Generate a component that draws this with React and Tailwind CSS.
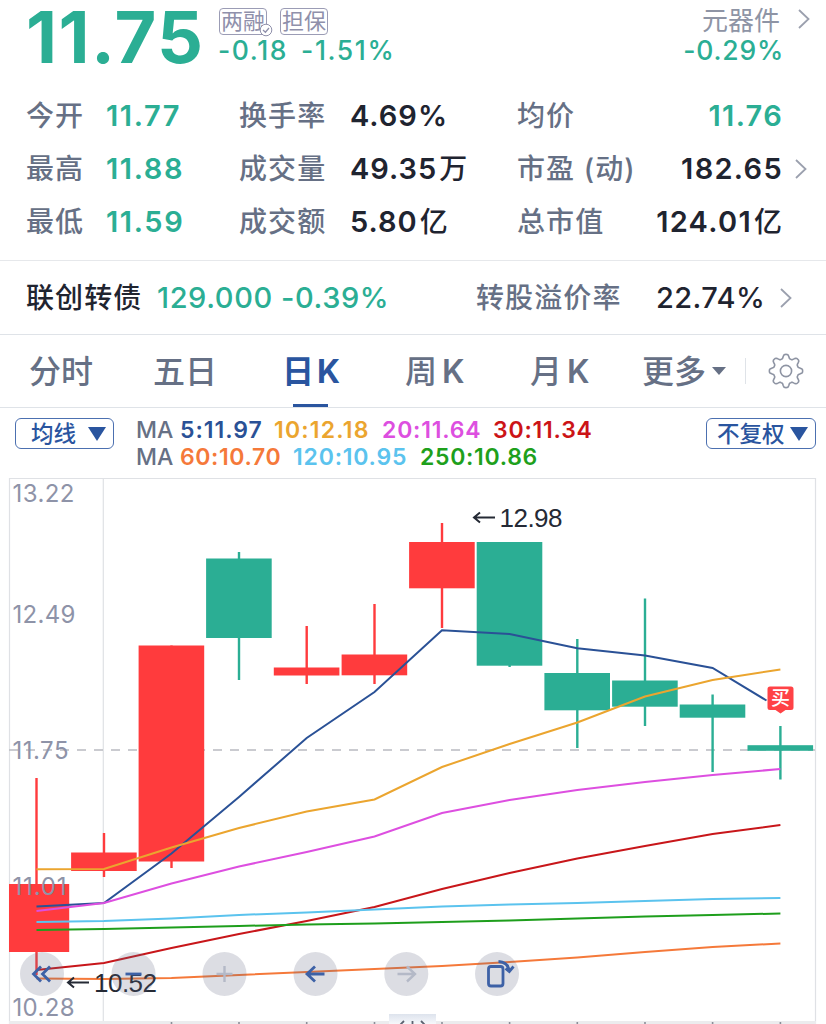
import React from 'react';

const CENTERS = [36.5, 104, 171.5, 239, 306.7, 374.5, 442, 509.6, 577.3, 645, 712.6, 780.4];

const RED = '#ff3b3d';
const GREEN = '#2bae94';

// body top / bottom, wick top / bottom
const CANDLES = [
  { up: true, body: [884, 952], wick: [778, 975] },
  { up: true, body: [852.5, 871], wick: [833, 877] },
  { up: true, body: [645.5, 861.5], wick: [645.5, 868] },
  { up: false, body: [558.5, 638], wick: [552, 680] },
  { up: true, body: [667.5, 675.5], wick: [626, 684] },
  { up: true, body: [654.5, 675.3], wick: [604, 684] },
  { up: true, body: [542, 588.3], wick: [523, 628] },
  { up: false, body: [542, 665.7], wick: [542, 667] },
  { up: false, body: [673, 710.3], wick: [639, 748] },
  { up: false, body: [680.5, 706.7], wick: [598.5, 726] },
  { up: false, body: [704.5, 717.7], wick: [694.5, 772] },
  { up: false, body: [745.2, 750.8], wick: [726, 779.5] },
];

const AVERAGES = [
  { color: '#c8161a', ys: [970, 963, 948, 934, 921, 907, 889, 873, 858.5, 846, 834, 825] },
  { color: '#f5793a', ys: [978.5, 979, 978, 975, 972, 969, 966, 962, 957.5, 952, 947, 943.5] },
  { color: '#5bc3ee', ys: [922, 921, 918.5, 915, 912.5, 909.5, 906.5, 904.5, 903, 901, 899, 898] },
  { color: '#1e9e1c', ys: [930, 929, 927.5, 926, 924.5, 923.5, 922, 920.5, 918.5, 916.5, 915, 913.5] },
  // the last segment stops short of the buy marker
  { color: '#2a5196', ys: [906.5, 903, 853.5, 797, 738, 692, 630.3, 634, 648.3, 655.6, 668], end: '766.5,700.5' },
  { color: '#dd4fe0', ys: [911, 903, 883.5, 866.5, 852, 836.5, 813, 800, 790, 782, 775, 769] },
  { color: '#eba52f', ys: [869.3, 869, 847.5, 828, 811.5, 799.5, 767, 744, 722.5, 696.5, 680, 669.5] },
];

const PRICE_LABELS = [
  { text: '13.22', y: 501.5, length: 62 },
  { text: '12.49', y: 623, length: 63 },
  { text: '11.75', y: 759, length: 56 },
  { text: '11.01', y: 894.5, length: 54 },
  { text: '10.28', y: 1015.5, length: 62 },
];

const TABS = [
  { label: '分时', width: 'w-[124px]' },
  { label: '五日', width: 'w-[129px]' },
  { label: '日', k: true, width: 'w-[123px]', active: true },
  { label: '周', k: true, width: 'w-[125px]' },
  { label: '月', k: true, width: 'w-[112px]' },
];

const STATS = [
  [
    { label: '今开', value: '11.77', green: true },
    { label: '换手率', value: '4.69%' },
    { label: '均价', value: '11.76', green: true },
  ],
  [
    { label: '最高', value: '11.88', green: true },
    { label: '成交量', value: '49.35', unit: '万' },
    { label: '市盈 (动)', value: '182.65', arrow: true },
  ],
  [
    { label: '最低', value: '11.59', green: true },
    { label: '成交额', value: '5.80', unit: '亿' },
    { label: '总市值', value: '124.01', unit: '亿' },
  ],
];

const Chevron = ({ className = '' }) => (
  <svg className={className} width="12" height="20" viewBox="0 0 12 20" fill="none" stroke="#9ba0ae" strokeWidth="1.8">
    <path d="M1 1 L10.5 10 L1 19" />
  </svg>
);

const Value = ({ item, className = '' }) => (
  <span
    className={`whitespace-nowrap text-[29px] font-semibold ${
      item.green ? 'text-[#2bae94]' : 'text-[#1f2430]'
    } ${className}`}
  >
    {item.value}
    {item.unit && <span className="ml-[2px] text-[28px] font-medium tracking-normal">{item.unit}</span>}
  </span>
);

const Label = ({ children, className = '' }) => (
  <span className={`text-[28px] font-medium tracking-[1.1px] whitespace-nowrap text-[#667085] ${className}`}>
    {children}
  </span>
);

const Header = () => (
  <header className="flex h-[89px]">
    <div className="w-[219px] pl-[26px] text-[72px] leading-[73px] font-bold tracking-[1.4px] whitespace-nowrap text-[#2bae94]">
      11.75
    </div>
    <div className="flex-1 pt-2">
      <div className="flex h-[27px] text-[22px] leading-[25px] text-[#8f90ab]">
        <div className="relative h-[27px] w-[48px] rounded-[4px] border border-[#9b9cb5] text-center whitespace-nowrap">
          两融
          <svg className="absolute top-[14px] left-[39px]" width="14" height="14" viewBox="0 0 14 14" fill="none">
            <circle cx="7" cy="7" r="5.8" fill="#fff" stroke="#8f90ab" strokeWidth="1" />
            <path d="M4 7 L6.4 9.2 L10 5" stroke="#8f90ab" strokeWidth="1.3" />
          </svg>
        </div>
        <div className="ml-[13px] h-[27px] w-[48px] rounded-[4px] border border-[#9b9cb5] text-center whitespace-nowrap">
          担保
        </div>
      </div>
      <div className="-ml-px flex gap-[13px] text-[26.5px] leading-[30px] font-medium tracking-[1.6px] text-[#2bae94]">
        <span>-0.18</span>
        <span>-1.51%</span>
      </div>
    </div>
    <div className="w-[160px] pt-1 text-right">
      <div className="text-[26px] leading-[33px] text-[#8e94a5]">元器件</div>
      <div className="-mr-1 text-[26.5px] leading-[27px] font-medium tracking-[0.8px] text-[#2bae94]">-0.29%</div>
    </div>
    <div className="w-[46px] pt-[9px] pl-[18px]">
      <Chevron />
    </div>
  </header>
);

const Stats = () => (
  <section className="h-[171px]">
    {STATS.map(([a, b, c]) => (
      <div key={a.label} className="flex h-[53px] items-center">
        <Label className="w-[106px] pl-[26px]">{a.label}</Label>
        <Value item={a} className="w-[133px] tracking-[1.6px]" />
        <Label className="w-[111px]">{b.label}</Label>
        <Value item={b} className="w-[167px] tracking-[1px]" />
        <Label className="w-[125px] tracking-[0.6px]">{c.label}</Label>
        <Value item={c} className={`text-right tracking-[1.3px] ${c.unit ? 'w-[140px]' : 'w-[141px]'}`} />
        {c.arrow && <Chevron className="ml-[12px]" />}
      </div>
    ))}
  </section>
);

const BondRow = () => (
  <section className="flex h-[74px] items-center border-t border-[#e6e8eb] text-[29px] font-medium">
    <span className="w-[157px] pl-[26px] text-[28px] tracking-[1.1px] whitespace-nowrap text-[#1f2430]">联创转债</span>
    <span className="w-[124px] tracking-[0.6px] text-[#2bae94]">129.000</span>
    <span className="w-[195px] tracking-[0.6px] text-[#2bae94]">-0.39%</span>
    <Label className="w-[180px]">转股溢价率</Label>
    <span className="w-[124px] tracking-[0.4px] text-[#1f2430]">22.74%</span>
    <Chevron />
  </section>
);

const Gear = () => {
  // eight rounded teeth around the hub
  const points = [];
  for (let i = 0; i < 96; i++) {
    const t = (i / 96) * Math.PI * 2;
    const wave = Math.max(-1, Math.min(1, 1.5 * Math.cos(8 * t)));
    const r = 14.6 + 2 * wave;
    points.push(`${(18 + r * Math.cos(t)).toFixed(2)} ${(18 + r * Math.sin(t)).toFixed(2)}`);
  }
  return (
    <svg width="36" height="36" viewBox="0 0 36 36" fill="none" stroke="#8e94a3" strokeWidth="1.6" strokeLinejoin="round">
      <path d={`M${points.join('L')}Z`} />
      <circle cx="18" cy="18" r="5.6" />
    </svg>
  );
};

const Tabs = () => (
  <nav className="flex h-[74px] items-center border-t border-b border-[#dfe3e8] pl-[29px] text-[32px] font-medium text-[#667085]">
    {TABS.map((tab) => (
      <div
        key={tab.label}
        className={`relative flex h-full items-center pt-[2px] whitespace-nowrap ${tab.width} ${
          tab.active ? 'font-bold text-[#2a559f]' : ''
        }`}
      >
        {tab.label}
        {tab.k && <span className={tab.active ? 'ml-[3px]' : 'ml-[5px] font-semibold'}>K</span>}
        {tab.active && <span className="absolute bottom-0 left-[11px] h-[3px] w-[35px] bg-[#2a559f]" />}
      </div>
    ))}
    <div className="flex w-[103px] items-center gap-[6px] pt-[2px] whitespace-nowrap">
      更多
      <svg className="-mt-[2px]" width="14" height="8" viewBox="0 0 14 8" fill="#667085">
        <path d="M0 0H14L7 8Z" />
      </svg>
    </div>
    <div className="mr-[22px] h-[26px] w-px bg-[#dfe3e8]" />
    <Gear />
  </nav>
);

const SelectBox = ({ label, className }) => (
  <div className={`flex h-[31px] items-center justify-between rounded-[6px] border border-[#4c70b0] text-[22.5px] font-medium whitespace-nowrap text-[#2a559f] ${className}`}>
    {label}
    <svg width="18" height="14" viewBox="0 0 18 14" fill="#2a559f">
      <path d="M0 0H18L9 14Z" />
    </svg>
  </div>
);

const Legend = () => (
  <section className="flex h-[70px] pt-[10px]">
    <SelectBox label="均线" className="ml-[15px] w-[99px] pr-[7px] pl-[15px]" />
    <div className="ml-[22px] w-[570px] text-[23px] leading-[27px] font-semibold tracking-[0.8px] whitespace-nowrap">
      <div className="-mt-px flex">
        <span className="w-[44px] font-medium tracking-[0px] text-[#667085]">MA</span>
        <span className="w-[94px] tracking-[1px] text-[#2a5196]">5:11.97</span>
        <span className="w-[108px] tracking-[1.2px] text-[#eba52f]">10:12.18</span>
        <span className="w-[111px] text-[#dd4fe0]">20:11.64</span>
        <span className="text-[#cc1417]">30:11.34</span>
      </div>
      <div className="flex">
        <span className="w-[44px] font-medium tracking-[0px] text-[#667085]">MA</span>
        <span className="w-[113px] tracking-[0.6px] text-[#f5793a]">60:10.70</span>
        <span className="w-[127px] text-[#5bc3ee]">120:10.95</span>
        <span className="tracking-[0.7px] text-[#1ea01c]">250:10.86</span>
      </div>
    </div>
    <SelectBox label="不复权" className="w-[110px] pr-[7px] pl-[10px]" />
  </section>
);

const Candle = ({ x, up, body, wick, first }) => {
  const left = first ? 9 : x - 32.9;
  const right = first ? 69.2 : x + 32.7;
  return (
    <g fill={up ? RED : GREEN}>
      <rect x={x - 1.2} y={wick[0]} width="2.4" height={wick[1] - wick[0]} />
      <rect x={left} y={body[0]} width={right - left} height={body[1] - body[0]} />
    </g>
  );
};

const ChartButtons = () => (
  <g>
    {[42, 133.5, 224.5, 315.5, 406.3, 497].map((x) => (
      <circle key={x} cx={x} cy="974" r="22" fill="#606680" fillOpacity="0.22" />
    ))}
    <g fill="none" stroke="#3d61a6" strokeWidth="2.8">
      <path d="M41 966.5 L33.5 974 L41 981.5 M50 966.5 L42.5 974 L50 981.5" />
      <path d="M125.5 974H141.5" />
      <path d="M324.5 974H307 M315 966.5 L307 974 L315 981.5" />
      <rect x="488.5" y="966.5" width="14.5" height="19.5" rx="2.5" />
      <path d="M498.5 961.5 Q508 962 509.3 971 M505.5 968.5 L509.3 971.5 L513.5 966.5" />
    </g>
    <g fill="none" stroke="#b4b9c7" strokeWidth="2.4">
      <path d="M216.5 974H232.5 M224.5 966V982" />
      <path d="M397.5 974H415 M407 966.5 L415 974 L407 981.5" />
    </g>
  </g>
);

const Chart = () => (
  <svg className="block" width="826" height="546" viewBox="0 478 826 546" fontFamily="Inter, sans-serif">
    <defs>
      <linearGradient id="handle" x1="0" y1="0" x2="0" y2="1">
        <stop offset="0" stopColor="#dde3ed" />
        <stop offset="1" stopColor="#f6f8fb" />
      </linearGradient>
    </defs>
    <path d="M9.5 1024V478.5H815.5V1024 M103.3 478V1021" fill="none" stroke="#dfe1e5" strokeWidth="1.2" />
    <path d="M9 750H815" stroke="#b9bbc1" strokeWidth="1.3" strokeDasharray="9 8" />

    {CANDLES.map((candle, i) => (
      <Candle key={i} x={CENTERS[i]} first={i === 0} {...candle} />
    ))}

    {AVERAGES.map((line) => (
      <polyline
        key={line.color}
        points={[...line.ys.map((y, i) => `${CENTERS[i]},${y}`), line.end].filter(Boolean).join(' ')}
        fill="none"
        stroke={line.color}
        strokeWidth="2"
      />
    ))}

    {PRICE_LABELS.map((label) => (
      <text key={label.text} x="12.5" y={label.y} fontSize="24" fill="#8e93a8" textLength={label.length}>
        {label.text}
      </text>
    ))}

    {/* high / low markers */}
    <g fill="none" stroke="#252a35" strokeWidth="2">
      <path d="M495 517.5H474 M480 512.5 L474 517.5 L480 522.5" />
      <path d="M89 982.5H68 M74 977.5 L68 982.5 L74 987.5" />
    </g>
    <g fontFamily="'Liberation Sans', sans-serif" fontSize="26" fill="#252a35">
      <text x="499.5" y="526.5" textLength="63">12.98</text>
      <text x="94" y="991.5" textLength="63">10.52</text>
    </g>

    {/* buy marker */}
    <path d="M770 686.5H791Q793.5 686.5 793.5 689V707.5Q793.5 710 791 710H785.5L780.5 713.5L775.5 710H770Q767.5 710 767.5 707.5V689Q767.5 686.5 770 686.5Z" fill="#ff4246" />
    <text x="780.5" y="705.3" fontSize="19" fontWeight="500" textAnchor="middle" fill="#fff" fontFamily="'Noto Sans CJK SC', sans-serif">
      买
    </text>

    <ChartButtons />

    <rect x="9" y="1021" width="807" height="3" fill="#ececee" />
    {CENTERS.slice(2).map((x) => (
      <rect key={x} x={x - 0.8} y="1022" width="1.6" height="2" fill="#8a8e98" />
    ))}
    <rect x="389" y="1014" width="47" height="10" fill="url(#handle)" />
    <path d="M404 1021 L400 1025 M412.5 1021V1024 M421 1021 L425 1025" fill="none" stroke="#5b6270" strokeWidth="1.8" />
  </svg>
);

const App = () => (
  <div className="h-[1024px] w-[826px] bg-white font-['Inter','Noto_Sans_CJK_SC',sans-serif]">
    <Header />
    <Stats />
    <BondRow />
    <Tabs />
    <Legend />
    <Chart />
  </div>
);

export default App;
